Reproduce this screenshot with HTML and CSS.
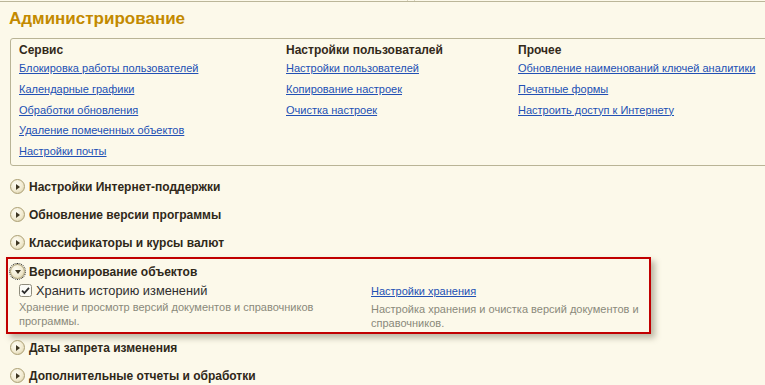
FILE: index.html
```html
<!DOCTYPE html>
<html>
<head>
<meta charset="UTF-8">
<title>Администрирование</title>
<link rel="stylesheet" href="styles.css">
</head>
<body>

<div class="topbar"><span class="tab"></span></div>

<h1 class="title">Администрирование</h1>

<div class="panel">
	<div class="col">
		<div class="col-head">Сервис</div>
		<a class="link" href="#">Блокировка работы пользователей</a>
		<a class="link" href="#">Календарные графики</a>
		<a class="link" href="#">Обработки обновления</a>
		<a class="link" href="#">Удаление помеченных объектов</a>
		<a class="link" href="#">Настройки почты</a>
	</div>
	<div class="col">
		<div class="col-head">Настройки пользоваталей</div>
		<a class="link" href="#">Настройки пользователей</a>
		<a class="link" href="#">Копирование настроек</a>
		<a class="link" href="#">Очистка настроек</a>
	</div>
	<div class="col">
		<div class="col-head">Прочее</div>
		<a class="link" href="#">Обновление наименований ключей аналитики</a>
		<a class="link" href="#">Печатные формы</a>
		<a class="link" href="#">Настроить доступ к Интернету</a>
	</div>
</div>

<div class="groups">
	<div class="group"><span class="toggle"></span><span class="group-title">Настройки Интернет-поддержки</span></div>
	<div class="group"><span class="toggle"></span><span class="group-title">Обновление версии программы</span></div>
	<div class="group"><span class="toggle"></span><span class="group-title">Классификаторы и курсы валют</span></div>

	<div class="group-open">
		<div class="group-head"><span class="toggle open focus"></span><span class="group-title">Версионирование объектов</span></div>
		<div class="group-body">
			<div class="cell">
				<label class="check">
					<svg width="13" height="13" viewBox="0 0 13 13"><rect x="0.5" y="0.5" width="12" height="12" rx="2" fill="#fbfbf6" stroke="#8f8c7c"/><path d="M3 6.6 L5.4 9 L10 3.8" fill="none" stroke="#2b2b2b" stroke-width="1.8"/></svg>
					Хранить историю изменений
				</label>
				<div class="hint">Хранение и просмотр версий документов и справочников программы.</div>
			</div>
			<div class="cell">
				<a class="link" href="#">Настройки хранения</a>
				<div class="hint">Настройка хранения и очистка версий документов и справочников.</div>
			</div>
		</div>
	</div>

	<div class="group"><span class="toggle"></span><span class="group-title">Даты запрета изменения</span></div>
	<div class="group"><span class="toggle"></span><span class="group-title">Дополнительные отчеты и обработки</span></div>
</div>

</body>
</html>
```

FILE: styles.css
```css
body{
	margin: 0;
	width: 765px;
	height: 385px;
	overflow: hidden;
	background-color: #fcf9ea;
	font-family: "Liberation Sans", Arial, sans-serif;
	font-size: 11px;
	color: #2e2e2e;
}
.topbar{
	display: flex;
	height: 1px;
	border-bottom: 1px solid #bbb699;
}
.tab{
	margin-left: 407px;
	width: 6px;
	border-left: 1px solid #d9d4bc;
	border-right: 1px solid #d9d4bc;
}
.title{
	margin: 0;
	padding: 5px 0 0 9px;
	font-size: 17px;
	line-height: 24px;
	color: #c38a00;
}

/* верхняя панель со ссылками */
.panel{
	display: grid;
	grid-template-columns: 267px 232px auto;
	width: 900px;
	margin: 7px 0 0 10px;
	padding: 4px 0 3px 8px;
	border: 1px solid #b9b496;
	border-radius: 3px;
}
.col{ display: flex; flex-direction: column; align-items: flex-start; }
.col-head{
	font-size: 12px;
	font-weight: bold;
	line-height: 15px;
	color: #33291a;
}
.link{
	line-height: 20.75px;
	color: #2250b4;
	text-decoration: underline;
	white-space: nowrap;
}

/* группы */
.groups{ margin-top: 7px; }
.group, .group-head{
	display: flex;
	align-items: center;
	gap: 4px;
	height: 28px;
	padding-left: 10px;
}
.group-title{
	font-size: 12px;
	font-weight: bold;
	color: #2f2819;
}
.toggle{
	display: flex;
	align-items: center;
	justify-content: center;
	box-sizing: border-box;
	width: 15px;
	height: 15px;
	border: 1px solid #ab9f74;
	border-radius: 50%;
	background: radial-gradient(circle at 40% 35%, #fffef6 0%, #f1ead0 55%, #d3c79c 100%);
}
.toggle::after{
	content: "";
	margin-left: 1px;
	border-left: 4px solid #3d3522;
	border-top: 3px solid transparent;
	border-bottom: 3px solid transparent;
}
.toggle.open::after{
	margin: 1px 0 0 0;
	border-top: 4px solid #3d3522;
	border-left: 3px solid transparent;
	border-right: 3px solid transparent;
	border-bottom: 0;
}
.focus{ outline: 1px dotted #222; }

.group-open{
	width: 641px;
	margin-left: 6px;
	padding-bottom: 2px;
	border: 2px solid #c10000;
	box-shadow: 4px 4px 6px rgba(90, 85, 60, 0.4);
}
.group-open .group-head{
	height: 20px;
	padding: 3px 0 0 2px;
}
.group-body{
	display: grid;
	grid-template-columns: 352px 276px;
	padding: 2px 0 0 11px;
}
.cell{ display: flex; flex-direction: column; align-items: flex-start; }
.cell .link{ line-height: 14px; }
.check{
	display: flex;
	align-items: center;
	gap: 4px;
	font-size: 12.8px;
	line-height: 14px;
	color: #2e2e2e;
}
.hint{
	margin-top: 2px;
	width: 330px;
	line-height: 14px;
	color: #8a897b;
}
.cell + .cell .hint{
	margin-top: 4px;
	width: 272px;
}
```
